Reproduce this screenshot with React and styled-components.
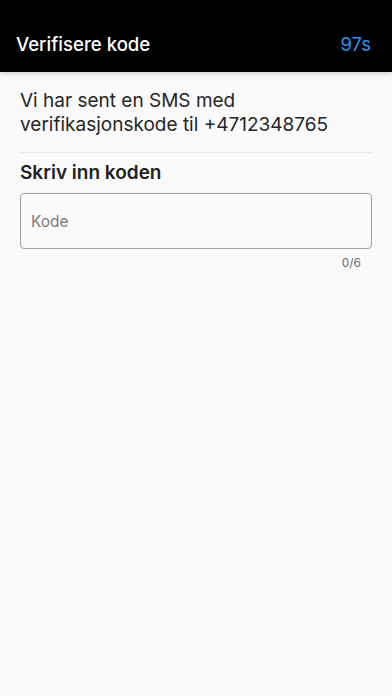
import React from "react";
import styled, { createGlobalStyle } from "styled-components";

const Global = createGlobalStyle`
  html, body { margin: 0; padding: 0; background: #fafafa; }
  body { font-family: Inter, "Noto Sans", sans-serif; -webkit-font-smoothing: antialiased; }
  * { box-sizing: border-box; }
`;

const Screen = styled.div`
  width: 392px;
  height: 696px;
  background: #fafafa;
  display: flex;
  flex-direction: column;
  overflow: hidden;
`;

const Header = styled.header`
  height: 72px;
  background: #000;
  display: flex;
  align-items: flex-end;
  justify-content: space-between;
  padding: 0 21px 16px 16px;
  box-shadow: 0 2px 6px rgba(0, 0, 0, 0.18);
  position: relative;
  z-index: 1;
`;

const Title = styled.h1`
  margin: 0;
  color: #fff;
  font-size: 18.6px;
  font-weight: 500;
  line-height: 24px;
`;

const Timer = styled.span`
  color: #2196f3;
  font-size: 18.5px;
  font-weight: 400;
  line-height: 24px;
`;

const Body = styled.main`
  padding: 17px 20px 0 20px;
  display: flex;
  flex-direction: column;
`;

const Info = styled.p`
  margin: 0;
  color: #262626;
  font-size: 19px;
  line-height: 24px;
  padding-bottom: 15px;
  border-bottom: 1px solid #e8e8e8;
`;

const Label = styled.h2`
  margin: 8px 0 0 0;
  color: #222;
  font-size: 19px;
  font-weight: 600;
  line-height: 24px;
`;

const Input = styled.input`
  margin-top: 8px;
  height: 56px;
  width: 100%;
  border: 1px solid #a0a0a0;
  border-radius: 4px;
  background: transparent;
  padding: 0 10px;
  font-family: inherit;
  font-size: 15.5px;
  color: #222;
  outline: none;
  &::placeholder { color: #7a7a7a; }
`;

const Counter = styled.div`
  align-self: flex-end;
  margin-top: 6px;
  margin-right: 11px;
  font-size: 12px;
  color: #6e6e6e;
  line-height: 16px;
`;

export default function App() {
  return (
    <>
      <Global />
      <Screen>
        <Header>
          <Title>Verifisere kode</Title>
          <Timer>97s</Timer>
        </Header>
        <Body>
          <Info>Vi har sent en SMS med verifikasjonskode til +4712348765</Info>
          <Label>Skriv inn koden</Label>
          <Input placeholder="Kode" />
          <Counter>0/6</Counter>
        </Body>
      </Screen>
    </>
  );
}
